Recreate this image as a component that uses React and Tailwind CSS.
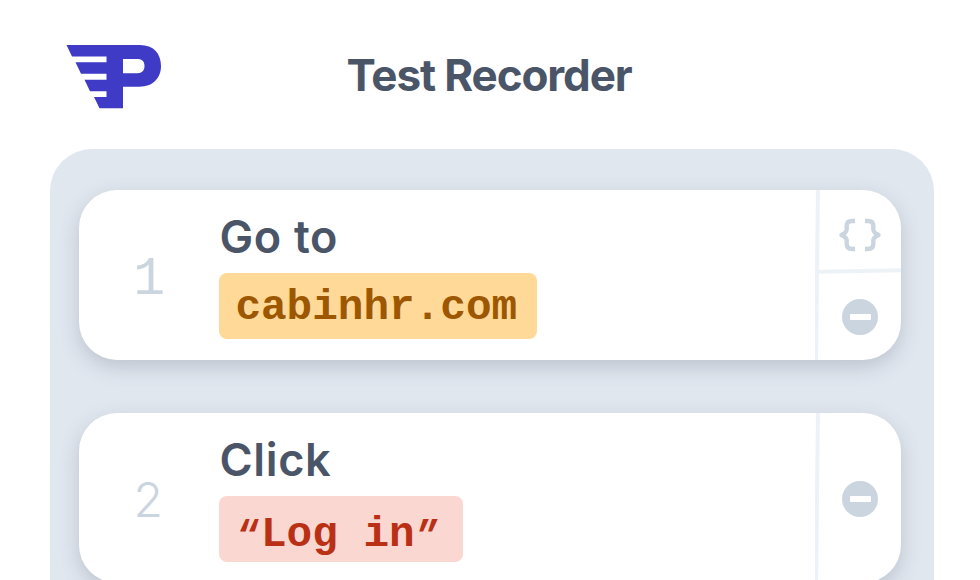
import React from 'react'
import clsx from 'clsx'

const steps = [
  { id: 1, action: 'Go to', value: 'cabinhr.com', code: true },
  { id: 2, action: 'Click', value: 'Log in', quoted: true, code: false },
]

const Logo = () => (
  <svg className="block" width="96" height="65" viewBox="0 0 96 65" fill="#3f3bc6">
    <path
      fillRule="evenodd"
      d="M0.5 0H74C87.5 0 95 8.5 95 21S86.5 41.700 73.500 41.700H57V63.300H33.500L28 52H40.500V46.200H24L18.500 34.700H40.500V28.700H15L9.500 17.300H40.500V11.500H6ZM57 14V28.200H71.500C76 28.200 78.500 25.500 78.500 21S76 14 71.500 14Z"
    />
  </svg>
)

const BracesIcon = () => (
  <svg className="block" width="44" height="34" viewBox="0 0 44 34" fill="none" stroke="#cbd5e0" strokeWidth="4.400" strokeLinejoin="round">
    <path d="M17 3H14Q8.700 3 8.700 8V11.500Q8.700 13.500 6.400 15.400L3.500 17L6.400 18.600Q8.700 20.500 8.700 22.500V26Q8.700 31 14 31H17" />
    <path d="M27 3H30Q35.300 3 35.300 8V11.500Q35.300 13.500 37.600 15.400L40.500 17L37.600 18.600Q35.300 20.500 35.300 22.500V26Q35.300 31 30 31H27" />
  </svg>
)

const RemoveIcon = () => (
  <div className="flex size-9 items-center justify-center rounded-full bg-[#cbd5e0]">
    <div className="h-1.5 w-[21px] rounded-[1px] bg-white"></div>
  </div>
)

const StepCard = ({ step }) => {
  return (
    <div className="flex h-[170px] shrink-0 rounded-[38px] bg-white shadow-[0_7px_20px_rgba(74,85,104,0.24)]">
      <div className="flex w-[140.4px] items-center justify-center text-[#cbd5e0]">
        <span
          className={clsx(
            step.id === 1
              ? "pt-[11px] font-['Liberation_Mono',monospace] text-[53px]"
              : "pt-[3px] pr-[2px] font-['Inter',sans-serif] text-[48px] font-light",
            'leading-none'
          )}
        >
          {step.id}
        </span>
      </div>

      <div className="flex flex-1 flex-col items-start pt-[18.5px] font-['Inter',sans-serif]">
        <p className="h-[64px] text-[45px] leading-[56px] font-semibold tracking-[0.7px] text-[#4a5568]">
          {step.action}
        </p>
        <div
          className={clsx(
            "flex h-[66px] items-center rounded-lg px-4 font-['Liberation_Mono',monospace] text-[42.7px] leading-none font-bold whitespace-pre",
            step.code ? 'w-[318px] bg-[#ffd998] pt-1.5 text-[#9c5700]' : 'w-[244px] bg-[#fad7d1] pt-[13px] text-[#b93015]'
          )}
        >
          {step.quoted ? (
            <>
              <span className="w-[25.6px] shrink-0 font-['Inter',sans-serif] font-semibold italic">“</span>
              <span>{step.value}</span>
              <span className="w-[25.6px] shrink-0 font-['Inter',sans-serif] font-semibold italic">”</span>
            </>
          ) : (
            step.value
          )}
        </div>
      </div>

      {/* Card actions */}
      <div className="flex w-[86px] overflow-hidden rounded-r-[38px]">
        <div className="-my-px w-[4px] shrink-0 rotate-[0.6deg] bg-[#edf2f7]"></div>
        <div className="flex flex-1 flex-col">
          {step.code && (
            <>
              <div className="flex h-[79px] items-center justify-center pt-[11px]">
                <BracesIcon />
              </div>
              <div className="h-[4px] shrink-0 -rotate-[1.2deg] bg-[#edf2f7]"></div>
            </>
          )}
          <div className="flex flex-1 items-center justify-center pt-px">
            <RemoveIcon />
          </div>
        </div>
      </div>
    </div>
  )
}

const App = () => {
  return (
    <div className="flex h-[580px] w-[980px] flex-col overflow-hidden bg-white font-['Inter',sans-serif]">
      <header className="flex h-[149px] shrink-0 items-start pt-[45px] pl-[66px]">
        <Logo />
        <h1 className="ml-[184.5px] text-[44px] leading-[60px] font-bold tracking-[-1.1px] whitespace-nowrap text-[#4a5568]">
          Test Recorder
        </h1>
      </header>

      <main className="mr-[46px] ml-[50px] flex flex-1 flex-col gap-[53px] overflow-hidden rounded-t-[42px] bg-[#e1e7ef] pt-[41px] pr-[33px] pl-[29px]">
        {steps.map((step) => (
          <StepCard key={step.id} step={step} />
        ))}
      </main>
    </div>
  )
}

export default App
